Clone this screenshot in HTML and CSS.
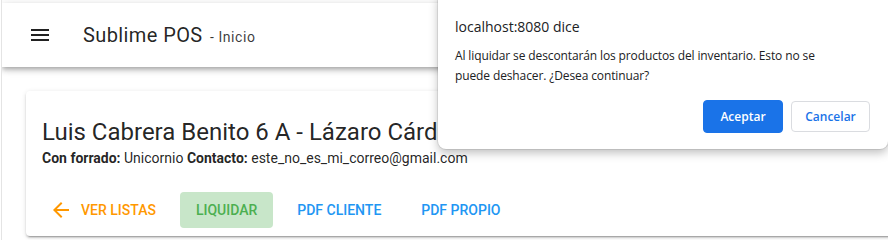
FILE: index.html
```html
<!DOCTYPE html>
<html lang="es">
<head>
<meta charset="utf-8">
<title>Sublime POS</title>
<link rel="stylesheet" href="styles.css">
</head>
<body>
<div class="app">
  <header class="appbar">
    <button class="nav-icon" aria-label="menu">
      <svg width="24" height="24" viewBox="0 0 24 24"><path d="M3 18h18v-2H3v2zm0-5h18v-2H3v2zm0-7v2h18V6H3z" fill="#212121"/></svg>
    </button>
    <div class="toolbar-title">Sublime POS <span class="sub">- Inicio</span></div>
    <div class="spacer"></div>
    <span class="edge-icon"></span>
  </header>
  <main class="content">
    <section class="card">
      <h1 class="card-title">Luis Cabrera Benito 6 A - Lázaro Cárdenas</h1>
      <p class="card-sub"><b>Con forrado:</b> Unicornio <b>Contacto:</b> este_no_es_mi_correo@gmail.com</p>
      <div class="actions">
        <button class="btn btn-orange">
          <svg width="24" height="24" viewBox="0 0 24 24"><path d="M20 11H7.83l5.59-5.59L12 4l-8 8 8 8 1.41-1.41L7.83 13H20v-2z" fill="currentColor"/></svg>
          Ver listas
        </button>
        <button class="btn btn-green">Liquidar</button>
        <button class="btn btn-blue">PDF Cliente</button>
        <button class="btn btn-blue">PDF Propio</button>
      </div>
    </section>
  </main>
  <div class="dialog" role="dialog">
    <div class="dlg-title">localhost:8080 dice</div>
    <div class="dlg-msg">Al liquidar se descontarán los productos del inventario. Esto no se puede deshacer. ¿Desea continuar?</div>
    <div class="dlg-buttons">
      <button class="dlg-btn primary">Aceptar</button>
      <button class="dlg-btn secondary">Cancelar</button>
    </div>
  </div>
</div>
</body>
</html>
```

FILE: styles.css
```css
* { box-sizing: border-box; }
html, body { margin: 0; padding: 0; background: #fff; }
body { font-family: Roboto, "Noto Sans", sans-serif; color: rgba(0,0,0,.87); overflow: hidden; }

.app {
  position: relative;
  width: 888px;
  height: 240px;
  padding-top: 3px;
  border-left: 1px solid #e4e4e4;
  margin-left: 1px;
  overflow: hidden;
}

.appbar {
  height: 64px;
  width: 920px;
  display: flex;
  align-items: center;
  background: #fff;
  padding: 0 16px 0 26px;
  box-shadow: 0 2px 4px -1px rgba(0,0,0,.2), 0 4px 5px 0 rgba(0,0,0,.14), 0 1px 10px 0 rgba(0,0,0,.12);
  position: relative;
  z-index: 1;
}
.nav-icon {
  border: 0; background: none; padding: 0; margin: 0;
  width: 24px; height: 24px; display: flex;
}
.toolbar-title {
  margin-left: 31px;
  font-size: 20px;
  font-weight: 400;
  letter-spacing: .02em;
  color: rgba(0,0,0,.87);
  white-space: nowrap;
}
.toolbar-title .sub { font-size: 14px; color: rgba(0,0,0,.78); margin-left: 2px; letter-spacing: .04em; }
.spacer { flex: 1; }
.edge-icon { width: 14px; height: 3px; background: #222; margin-right: 6px; margin-top: 12px; }

.content { padding: 24px 0 0 24px; }

.card {
  width: 900px;
  background: #fff;
  border-radius: 4px;
  box-shadow: 0 3px 1px -2px rgba(0,0,0,.2), 0 2px 2px 0 rgba(0,0,0,.14), 0 1px 5px 0 rgba(0,0,0,.12);
  padding: 25px 0 8px 0;
}
.card-title {
  margin: 0;
  padding: 0 16px;
  font-size: 24px;
  line-height: 32px;
  font-weight: 400;
  white-space: nowrap;
  overflow: hidden;
}
.card-sub {
  margin: 0;
  padding: 0 16px;
  font-size: 14px;
  line-height: 20px;
  color: rgba(0,0,0,.87);
}
.card-sub b { font-weight: 700; }

.actions {
  display: flex;
  gap: 8px;
  padding: 24px 8px 0 9px;
}
.btn {
  height: 36px;
  border: 0;
  border-radius: 4px;
  padding: 0 16px;
  background: transparent;
  font-family: Roboto, sans-serif;
  font-size: 14px;
  font-weight: 500;
  text-transform: uppercase;
  display: flex;
  align-items: center;
  letter-spacing: 0;
}
.btn svg { margin-left: -2px; margin-right: 8px; }
.btn-orange { color: #ff9800; }
.btn-green { color: #4caf50; background: #c8e6c9; }
.btn-blue { color: #2196f3; }

.dialog {
  position: absolute;
  left: 436px;
  top: -8px;
  width: 450px;
  height: 157px;
  background: #fff;
  border-radius: 8px;
  box-shadow: 0 0 0 1px rgba(0,0,0,.08), 0 4px 10px rgba(0,0,0,.25);
  padding: 25px 18px 0 17px;
  font-family: "Open Sans", "Noto Sans", sans-serif;
  z-index: 5;
}
.dlg-title {
  font-size: 14px;
  line-height: 20px;
  color: #202124;
}
.dlg-msg {
  margin-top: 9px;
  font-size: 12px;
  line-height: 20px;
  color: #202124;
  padding-right: 40px;
  letter-spacing: -.01em;
}
.dlg-buttons {
  display: flex;
  justify-content: flex-end;
  gap: 8px;
  margin-top: 14px;
}
.dlg-btn {
  height: 33px;
  width: 80px;
  border-radius: 4px;
  font-family: "Open Sans", sans-serif;
  font-size: 12px;
  font-weight: 600;
}
.dlg-btn.primary { background: #1a73e8; color: #fff; border: 1px solid #1a73e8; }
.dlg-btn.secondary { background: #fff; color: #1a73e8; border: 1px solid #dadce0; height: 31px; margin-top: 1px; width: 79px; }
```
